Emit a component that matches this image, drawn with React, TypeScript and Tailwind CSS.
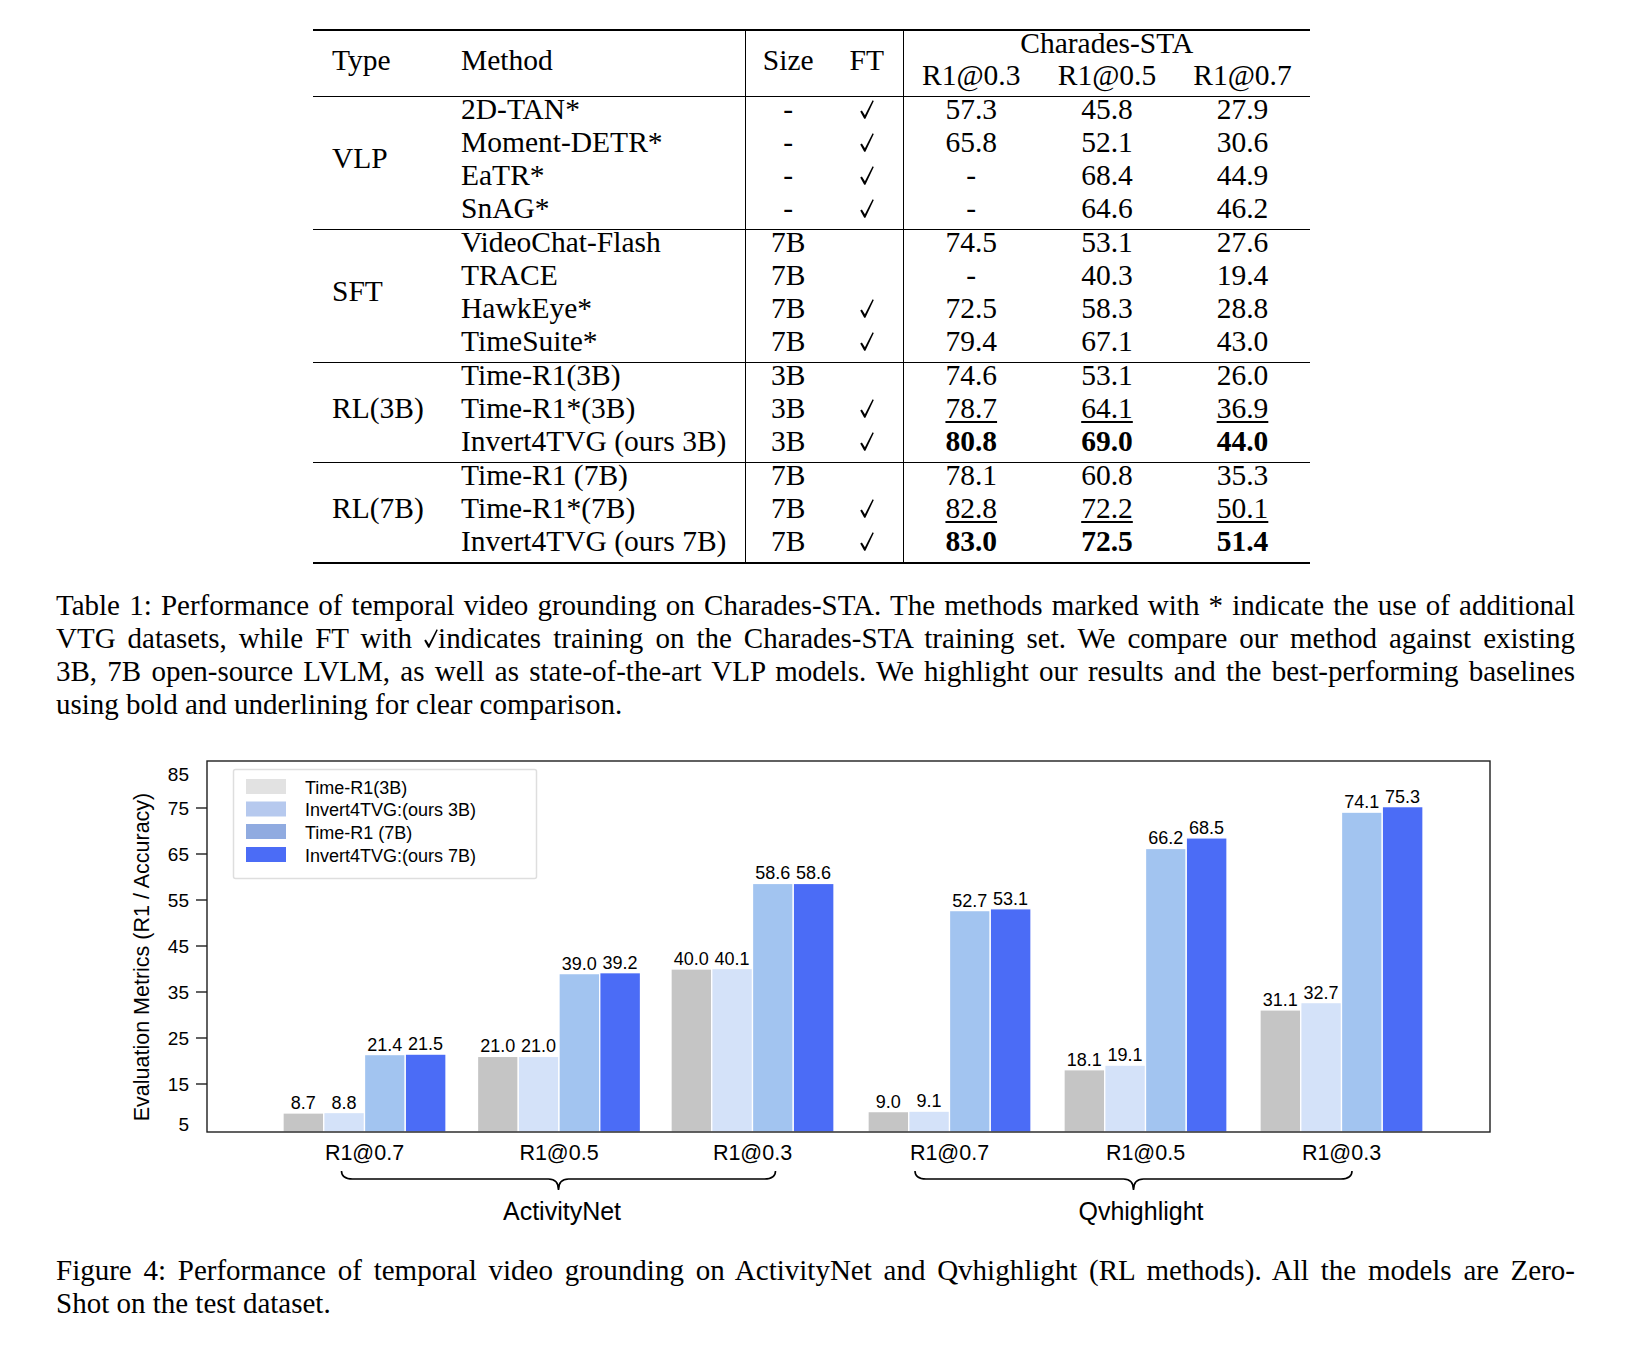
type Row = {
    method: string
    size: string
    ft: boolean
    vals: string[]
    mark?: 'under' | 'bold'
}

type Group = { type: string; rows: Row[] }

const groups: Group[] = [
    {
        type: 'VLP',
        rows: [
            { method: '2D-TAN*', size: '-', ft: true, vals: ['57.3', '45.8', '27.9'] },
            { method: 'Moment-DETR*', size: '-', ft: true, vals: ['65.8', '52.1', '30.6'] },
            { method: 'EaTR*', size: '-', ft: true, vals: ['-', '68.4', '44.9'] },
            { method: 'SnAG*', size: '-', ft: true, vals: ['-', '64.6', '46.2'] },
        ],
    },
    {
        type: 'SFT',
        rows: [
            { method: 'VideoChat-Flash', size: '7B', ft: false, vals: ['74.5', '53.1', '27.6'] },
            { method: 'TRACE', size: '7B', ft: false, vals: ['-', '40.3', '19.4'] },
            { method: 'HawkEye*', size: '7B', ft: true, vals: ['72.5', '58.3', '28.8'] },
            { method: 'TimeSuite*', size: '7B', ft: true, vals: ['79.4', '67.1', '43.0'] },
        ],
    },
    {
        type: 'RL(3B)',
        rows: [
            { method: 'Time-R1(3B)', size: '3B', ft: false, vals: ['74.6', '53.1', '26.0'] },
            { method: 'Time-R1*(3B)', size: '3B', ft: true, vals: ['78.7', '64.1', '36.9'], mark: 'under' },
            { method: 'Invert4TVG (ours 3B)', size: '3B', ft: true, vals: ['80.8', '69.0', '44.0'], mark: 'bold' },
        ],
    },
    {
        type: 'RL(7B)',
        rows: [
            { method: 'Time-R1 (7B)', size: '7B', ft: false, vals: ['78.1', '60.8', '35.3'] },
            { method: 'Time-R1*(7B)', size: '7B', ft: true, vals: ['82.8', '72.2', '50.1'], mark: 'under' },
            { method: 'Invert4TVG (ours 7B)', size: '7B', ft: true, vals: ['83.0', '72.5', '51.4'], mark: 'bold' },
        ],
    },
]

// chart data, x = left edge of the first bar in page pixels
const chartGroups = [
    { label: 'R1@0.7', x: 283, vals: [8.7, 8.8, 21.4, 21.5] },
    { label: 'R1@0.5', x: 477.5, vals: [21.0, 21.0, 39.0, 39.2] },
    { label: 'R1@0.3', x: 671, vals: [40.0, 40.1, 58.6, 58.6] },
    { label: 'R1@0.7', x: 868, vals: [9.0, 9.1, 52.7, 53.1] },
    { label: 'R1@0.5', x: 1064, vals: [18.1, 19.1, 66.2, 68.5] },
    { label: 'R1@0.3', x: 1260, vals: [31.1, 32.7, 74.1, 75.3] },
]

const barColors = ['#c5c5c5', '#d4e2f9', '#a2c4f0', '#4b6cf6']
const legend = [
    { name: 'Time-R1(3B)', color: '#e2e2e2' },
    { name: 'Invert4TVG:(ours 3B)', color: '#b6c9ee' },
    { name: 'Time-R1 (7B)', color: '#90abe0' },
    { name: 'Invert4TVG:(ours 7B)', color: '#4b6cf6' },
]

const BAR_W = 40.75
const AXIS_BOTTOM = 1131
const yOf = (v: number) => 807 + (75 - v) * 4.6
const sans = 'Liberation Sans, Arial, sans-serif'

function Check() {
    return (
        <svg viewBox="0 0 14 19" className="inline-block h-[19px] w-[14px] align-baseline">
            <path d="M0.2 11.5 L1.9 10.4 L4.9 15.2 L12.6 0.2 L13.8 0.9 L5.4 18.8 L4.2 18.8 Z" fill="black" />
        </svg>
    )
}

function Value(props: { text: string; mark?: 'under' | 'bold' }) {
    if (props.mark === 'bold') return <span className="font-bold">{props.text}</span>
    if (props.mark === 'under')
        return <span className="underline decoration-[1.5px] underline-offset-[3px]">{props.text}</span>
    return <>{props.text}</>
}

function ResultsTable() {
    return (
        <table className="ml-[313px] w-[997px] table-fixed border-collapse border-y-2 border-black text-[29.5px] leading-[25px] text-black">
            <colgroup>
                <col className="w-[148px]" />
                <col className="w-[284px]" />
                <col className="w-[86px]" />
                <col className="w-[72px]" />
                <col className="w-[136px]" />
                <col className="w-[136px]" />
                <col className="w-[135px]" />
            </colgroup>
            <thead>
                <tr className="h-[32px]">
                    <th rowSpan={2} className="pb-[6px] pl-[19px] text-left font-normal">Type</th>
                    <th rowSpan={2} className="border-r border-black pb-[6px] text-left font-normal">Method</th>
                    <th rowSpan={2} className="pb-[6px] font-normal">Size</th>
                    <th rowSpan={2} className="border-r border-black pb-[6px] font-normal">FT</th>
                    <th colSpan={3} className="pb-[6px] font-normal">Charades-STA</th>
                </tr>
                <tr className="h-[34px]">
                    <th className="pb-[7px] font-normal">R1@0.3</th>
                    <th className="pb-[7px] font-normal">R1@0.5</th>
                    <th className="pb-[7px] font-normal">R1@0.7</th>
                </tr>
            </thead>
            {groups.map((g) => (
                <tbody key={g.type} className="border-t border-black">
                    {g.rows.map((r, i) => (
                        <tr key={r.method} className="h-[33px]">
                            {i === 0 && (
                                <td rowSpan={g.rows.length} className="pb-[8px] pl-[19px] align-middle">
                                    {g.type}
                                </td>
                            )}
                            <td className="border-r border-black pb-[8px] whitespace-nowrap">{r.method}</td>
                            <td className="pb-[8px] text-center">{r.size}</td>
                            <td className="border-r border-black pb-[8px] text-center">{r.ft && <Check />}</td>
                            {r.vals.map((v, k) => (
                                <td key={k} className="pb-[8px] text-center">
                                    <Value text={v} mark={v === '-' ? undefined : r.mark} />
                                </td>
                            ))}
                        </tr>
                    ))}
                </tbody>
            ))}
        </table>
    )
}

function Brace(props: { x1: number; x2: number; mid: number }) {
    let { x1, x2, mid } = props
    let d =
        `M${x1} 1170 Q${x1} 1178 ${x1 + 11} 1178 L${mid - 10} 1178 Q${mid} 1178 ${mid} 1189 ` +
        `Q${mid} 1178 ${mid + 10} 1178 L${x2 - 11} 1178 Q${x2} 1178 ${x2} 1170`
    return <path d={d} fill="none" stroke="black" strokeWidth={1.6} />
}

function Chart() {
    let ticks = [75, 65, 55, 45, 35, 25, 15]
    return (
        <svg width={1631} height={532} viewBox="0 721 1631 532" className="block">
            {chartGroups.map((g, gi) =>
                g.vals.map((v, i) => {
                    let x = g.x + i * BAR_W
                    let y = yOf(v)
                    return (
                        <g key={`${gi}-${i}`}>
                            <rect
                                x={x}
                                y={y}
                                width={BAR_W}
                                height={AXIS_BOTTOM - y}
                                fill={barColors[i]}
                                stroke="white"
                                strokeWidth={1.3}
                            />
                            <text
                                x={x + BAR_W / 2}
                                y={y - 4}
                                textAnchor="middle"
                                fontFamily={sans}
                                fontSize={18}
                                fill="black"
                            >
                                {v.toFixed(1)}
                            </text>
                        </g>
                    )
                }),
            )}

            {/* frame and ticks */}
            <rect x={207} y={760} width={1283} height={371} fill="none" stroke="#1f1f1f" strokeWidth={1.4} />
            {ticks.map((t) => (
                <g key={t}>
                    <line x1={196} x2={207} y1={yOf(t)} y2={yOf(t)} stroke="#1f1f1f" strokeWidth={1.4} />
                    <text x={189} y={yOf(t)} textAnchor="end" dominantBaseline="central" fontFamily={sans} fontSize={19}>
                        {t}
                    </text>
                </g>
            ))}
            <text x={189} y={773} textAnchor="end" dominantBaseline="central" fontFamily={sans} fontSize={19}>
                85
            </text>
            <text x={189} y={1123} textAnchor="end" dominantBaseline="central" fontFamily={sans} fontSize={19}>
                5
            </text>
            <text
                x={142}
                y={956}
                transform="rotate(-90 142 956)"
                textAnchor="middle"
                dominantBaseline="central"
                fontFamily={sans}
                fontSize={21.5}
            >
                Evaluation Metrics (R1 / Accuracy)
            </text>

            {/* legend */}
            <rect x={233.5} y={768.5} width={303} height={109} fill="white" stroke="#dedede" strokeWidth={1.5} rx={2} />
            {legend.map((l, i) => {
                let top = [778, 800.5, 823, 846][i]
                return (
                    <g key={l.name}>
                        <rect x={246} y={top} width={40} height={15} fill={l.color} />
                        <text x={305} y={top + 8.5} dominantBaseline="central" fontFamily={sans} fontSize={18}>
                            {l.name}
                        </text>
                    </g>
                )
            })}

            {/* x labels */}
            {chartGroups.map((g, gi) => (
                <text
                    key={gi}
                    x={g.x + 2 * BAR_W}
                    y={1152}
                    textAnchor="middle"
                    dominantBaseline="central"
                    fontFamily={sans}
                    fontSize={21.5}
                >
                    {g.label}
                </text>
            ))}
            <Brace x1={341.5} x2={775.5} mid={558.5} />
            <Brace x1={915} x2={1352} mid={1133.5} />
            <text x={562} y={1210} textAnchor="middle" dominantBaseline="central" fontFamily={sans} fontSize={25}>
                ActivityNet
            </text>
            <text x={1141} y={1210} textAnchor="middle" dominantBaseline="central" fontFamily={sans} fontSize={25}>
                Qvhighlight
            </text>
        </svg>
    )
}

function Line(props: { children: React.ReactNode; last?: boolean }) {
    return <div className={props.last ? '' : 'text-justify [text-align-last:justify]'}>{props.children}</div>
}

export default function App() {
    return (
        <div className="min-h-[1349px] w-[1631px] bg-white pt-[29px] font-['Liberation_Serif','Times_New_Roman',serif] text-black">
            <ResultsTable />

            <div className="mt-[25px] px-[56px] text-[29px] leading-[33.3px]">
                <Line>
                    Table 1: Performance of temporal video grounding on Charades-STA. The methods marked with * indicate
                    the use of additional
                </Line>
                <Line>
                    VTG datasets, while FT with <Check />
                    indicates training on the Charades-STA training set. We compare our method against existing
                </Line>
                <Line>
                    3B, 7B open-source LVLM, as well as state-of-the-art VLP models. We highlight our results and the
                    best-performing baselines
                </Line>
                <Line last>using bold and underlining for clear comparison.</Line>
            </div>

            <Chart />

            <div className="px-[56px] text-[29px] leading-[33px]">
                <Line>
                    Figure 4: Performance of temporal video grounding on ActivityNet and Qvhighlight (RL methods). All
                    the models are Zero-
                </Line>
                <Line last>Shot on the test dataset.</Line>
            </div>
        </div>
    )
}
